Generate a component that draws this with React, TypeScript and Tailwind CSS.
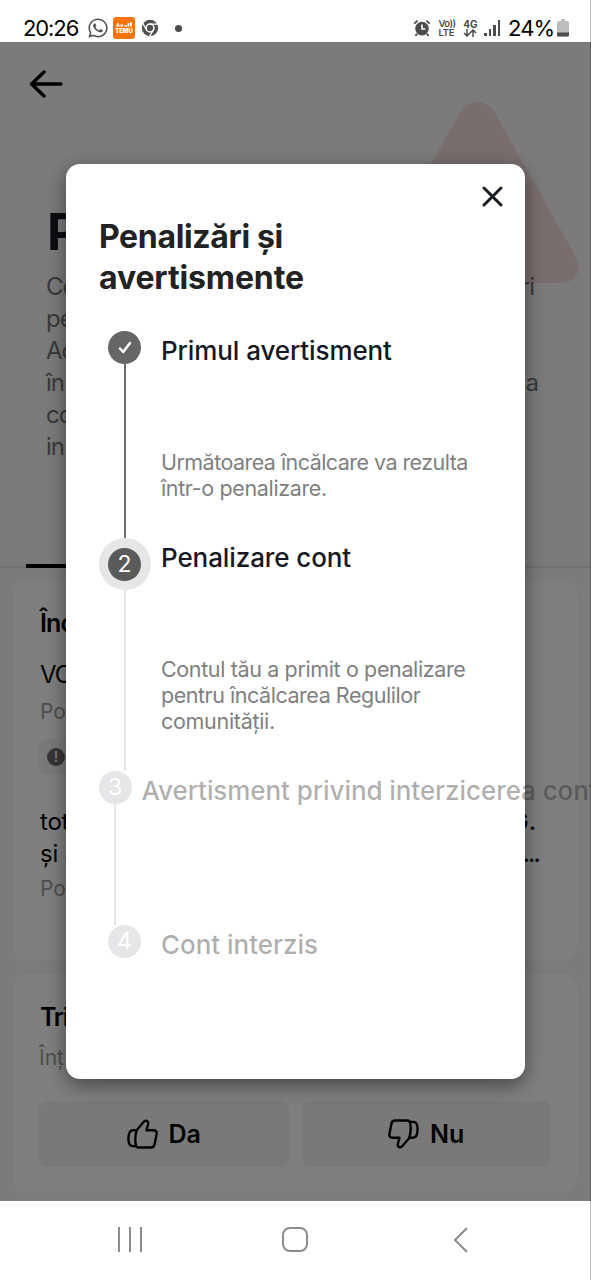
import React from 'react';
import { FaWhatsapp } from 'react-icons/fa';

function StatusBar() {
  return (
    <header className="flex h-[42px] shrink-0 items-end justify-between bg-white pr-[22px] pl-[23px] text-black">
      <div className="flex h-7 items-center">
        <span className="w-[56px] text-[22px] leading-7 tracking-[-1.1px]">20:26</span>
        <FaWhatsapp className="ml-[8px] size-[22px] text-[#555]" />
        <div className="ml-[4px] flex size-[22px] flex-col items-center justify-center rounded-[3px] bg-[#f97508] text-white">
          <svg className="h-[5px] w-[16px]" viewBox="0 0 16 5" fill="#fff">
            <path d="M0 4.500 2 .5l2 4zM4.500 2.500h2.500v2H4.500zM8 3.300h3v1.200H8zM11.500 1h1.600v3.500h-1.600zM13.800.5H16v4h-2.200z" />
          </svg>
          <span className="text-[6px] leading-[7px] font-black tracking-[-0.1px]">TEMU</span>
        </div>
        <svg className="ml-[6px] size-[18px]" viewBox="0 0 18 18">
          <circle cx="9" cy="9" r="8.2" fill="#505050" />
          <circle cx="9" cy="9" r="3.9" fill="#505050" stroke="#fff" strokeWidth="1.5" />
          <path d="M9 5.100h8M5.600 11 1.600 4.200M12.400 11l-4 6.600" stroke="#fff" strokeWidth="1.300" />
        </svg>
        <span className="ml-4 size-[7px] rounded-full bg-[#4a4a4a]" />
      </div>
      <div className="flex h-7 items-center text-[#4c4c4c]">
        <svg className="size-[18px]" viewBox="0 0 18 18">
          <circle cx="9" cy="9.6" r="6.8" fill="#4c4c4c" />
          <path d="M1.200 4.600 4.600 1.600M16.800 4.600l-3.400-3M4 14.800l-1.600 2M14 14.800l1.600 2" stroke="#4c4c4c" strokeWidth="1.9" />
          <path d="M9 5.400v4.600h3.400" stroke="#fff" strokeWidth="1.6" fill="none" />
        </svg>
        <div className="ml-[7px] flex w-[18px] flex-col text-[9.5px] leading-[9px] font-semibold">
          <span className="tracking-[-0.5px]">Vo))</span>
          <span className="tracking-[-0.2px]">LTE</span>
        </div>
        <div className="ml-[6px] flex w-4 flex-col items-center">
          <span className="text-[10px] leading-[10px] font-bold">4G</span>
          <svg className="h-[8px] w-[14px]" viewBox="0 0 14 8" fill="none" stroke="#4c4c4c" strokeWidth="1.5">
            <path d="M4 0v7M1 4l3 3 3-3M10 8V1M7 4l3-3 3 3" />
          </svg>
        </div>
        <div className="ml-[6px] flex h-4 items-end gap-[2px]">
          <span className="h-[3px] w-[2.4px] bg-[#4c4c4c]" />
          <span className="h-[7px] w-[2.4px] bg-[#4c4c4c]" />
          <span className="h-[11px] w-[2.4px] bg-[#4c4c4c]" />
          <span className="h-[16px] w-[2.4px] bg-[#4c4c4c]" />
        </div>
        <span className="ml-[8px] w-[45px] text-[22px] leading-7 tracking-[-0.9px] text-black">24%</span>
        <svg className="ml-[4px] h-[18px] w-3" viewBox="0 0 12 18">
          <path d="M4 0h4v2h2a2 2 0 0 1 2 2v12a1.600 1.600 0 0 1-1.600 1.600H1.600A1.600 1.600 0 0 1 0 16V4a2 2 0 0 1 2-2h2z" fill="#bdbdbd" />
          <path d="M0 13.500h12V16a1.600 1.600 0 0 1-1.600 1.600H1.600A1.600 1.600 0 0 1 0 16z" fill="#4c4c4c" />
        </svg>
      </div>
    </header>
  );
}

function Thumb({ down = false }: { down?: boolean }) {
  return (
    <svg
      className={down ? 'h-[30px] w-[31px] rotate-180' : 'h-[30px] w-[31px]'}
      viewBox="0 0 31 30"
      fill="none"
      stroke="#000"
      strokeWidth="2.4"
      strokeLinejoin="round"
      strokeLinecap="round"
    >
      <path d="M9.800 11 16.400 3.200c2-2.600 5.400-1.300 4.800 1.500l-1.700 6.600h7c2.200 0 3.500 1.500 3.100 3.600l-2 10.400c-.4 2-1.700 3.200-3.800 3.200H11.600c-1.700 0-2.600-.9-2.800-2.600-.8-5-.6-10.500 1-14.900z" />
      <path d="M8.600 11.300H6.400c-2.600 0-4 1.500-4.500 4.200-.5 2.400-.6 4.900-.2 7.300.4 2.700 1.900 4.300 4.300 4.300h3" />
    </svg>
  );
}

function BackgroundPage() {
  return (
    <main className="relative flex h-[1159px] shrink-0 flex-col bg-[#f7f7f7] text-black">
      <svg className="absolute top-[59px] left-[374px] h-[184px] w-[206px]" viewBox="0 0 206 184">
        <path d="M86 12C94-3 112-3 121 12L202 156Q208 170 199 178Q194 182 186 182H20Q12 182 7 178Q-2 170 4 156Z" fill="#f3dddc" />
      </svg>
      <div className="relative flex flex-col pl-[47px]">
        <svg className="mt-7 -ml-[18px] h-[28px] w-[34px]" viewBox="0 0 34 28" fill="none" stroke="#000" strokeWidth="3.300" strokeLinecap="round" strokeLinejoin="round">
          <path d="M32 14H3M15 2 2.500 14 15 26" />
        </svg>
        <h1 className="mt-[104px] text-[51px] leading-[60px] font-bold text-[#161823]">P</h1>
        <div className="mt-[9px] -ml-px flex w-[492px] justify-between text-[24px] leading-8 tracking-[-1px] text-[#747474]">
          <p className="flex flex-col">
            <span>Co</span>
            <span>pe</span>
            <span>Ac</span>
            <span>în</span>
            <span>co</span>
            <span>in</span>
          </p>
          <p className="flex flex-col items-end">
            <span className="mr-[4px]">ri</span>
            <span className="mt-16">a</span>
          </p>
        </div>
      </div>
      <div className="mt-[101px] flex h-[4px] shrink-0 items-center bg-[linear-gradient(#e3e3e3,#e3e3e3)] bg-[length:100%_2px] bg-bottom bg-no-repeat pl-[26px]">
        <span className="h-[4px] w-[80px] bg-black" />
      </div>
      <section className="mr-[14px] ml-[13px] mt-[13px] flex h-[380px] shrink-0 flex-col rounded-[14px] bg-white pl-[27px]">
        <h2 className="mt-[26px] text-[25px] leading-8 font-semibold tracking-[-0.8px]">Înc</h2>
        <p className="mt-5 text-[24px] leading-8 tracking-[-1px]">VO</p>
        <p className="mt-[7px] text-[21px] leading-7 text-[#9c9c9c]">Po</p>
        <div className="mt-[13px] -ml-px flex h-[35px] w-20 items-center rounded-md bg-[#f3f3f3] pl-2">
          <span className="flex size-[18px] items-center justify-center rounded-full bg-[#6b6b6b] text-[14px] leading-none font-semibold text-[#f3f3f3]">!</span>
        </div>
        <div className="mt-8 flex w-[499px] justify-between text-[24px] leading-8">
          <p className="flex flex-col tracking-[-0.2px]">
            <span>tot</span>
            <span>și a</span>
          </p>
          <p className="flex flex-col items-end font-medium">
            <span className="mr-[3px]">G.</span>
            <span className="tracking-[-1.8px]">...</span>
          </p>
        </div>
        <p className="mt-[5px] text-[21px] leading-7 text-[#9c9c9c]">Po</p>
      </section>
      <section className="mr-[14px] ml-[13px] mt-[13px] flex h-[219px] shrink-0 flex-col rounded-[14px] bg-white px-[26px]">
        <h2 className="mt-[27px] ml-px text-[25px] leading-8 font-semibold tracking-[-1.3px]">Tri</h2>
        <p className="mt-[11px] text-[21px] leading-7 text-[#9c9c9c]">Înț</p>
        <div className="mt-[29px] flex h-[66px] gap-[13px] text-[25px] font-semibold">
          <button className="flex flex-1 items-center justify-center gap-[11px] rounded-lg bg-[#f3f3f3]">
            <Thumb />
            <span className="pt-[2px]">Da</span>
          </button>
          <button className="flex flex-1 items-center justify-center gap-[11px] rounded-lg bg-[#f3f3f3]">
            <Thumb down />
            <span className="pt-[2px]">Nu</span>
          </button>
        </div>
      </section>
    </main>
  );
}

function Dialog() {
  return (
    <div className="absolute inset-x-0 top-[42px] flex h-[1159px] bg-black/50 pt-[122px] pl-[66px]">
      <div className="flex h-[915px] w-[459px] shrink-0 flex-col rounded-[14px] bg-white pl-[33px] shadow-[0_6px_20px_rgba(0,0,0,0.45)]">
        <div className="mt-[22px] mr-[22px] flex h-[21px] justify-end">
          <svg className="size-[21px]" viewBox="0 0 21 21" stroke="#161823" strokeWidth="3" strokeLinecap="round">
            <path d="M2 2l17 17M19 2 2 19" />
          </svg>
        </div>
        <h2 className="mt-[9px] flex flex-col text-[32px] leading-[41px] font-bold text-[#222]">
          <span className="tracking-[-0.35px]">Penalizări și</span>
          <span className="tracking-[-0.12px]">avertismente</span>
        </h2>
        <ol className="mt-[33px] -ml-[0.5px] flex flex-col text-[#161823]">
          <li className="flex h-[207px] gap-[10.5px]">
            <div className="flex w-[52px] flex-col items-center">
              <span className="flex size-[33px] items-center justify-center rounded-full bg-[#666]">
                <svg className="h-[13px] w-[14px]" viewBox="0 0 14 13" fill="none" stroke="#fff" strokeWidth="2.500" strokeLinecap="round" strokeLinejoin="round">
                  <path d="M2 7.500 5.200 11 12 2" />
                </svg>
              </span>
              <span className="w-[2px] flex-1 bg-[#6c6c6c]" />
            </div>
            <div className="pt-[3.5px]">
              <h3 className="text-[26px] leading-8 font-medium tracking-[-0.1px] whitespace-nowrap">Primul avertisment</h3>
              <p className="mt-[82px] flex flex-col text-[21.5px] leading-[26.2px] whitespace-nowrap text-[#808080]">
                <span className="tracking-[-0.55px]">Următoarea încălcare va rezulta</span>
                <span className="tracking-[-0.36px]">într-o penalizare.</span>
              </p>
            </div>
          </li>
          <li className="flex h-[233px] gap-[10.5px]">
            <div className="flex w-[52px] flex-col items-center">
              <span className="flex size-[52px] items-center justify-center rounded-full bg-[#e6e6e8]">
                <span className="flex size-[33px] items-center justify-center rounded-full bg-[#5a5a5a] text-[23px] leading-none text-white">2</span>
              </span>
              <span className="w-[2px] flex-1 bg-[#e6e6e8]" />
            </div>
            <div className="pt-[3.5px]">
              <h3 className="text-[26px] leading-8 font-medium tracking-[-0.1px] whitespace-nowrap">Penalizare cont</h3>
              <p className="mt-[82px] flex flex-col text-[21.5px] leading-[26.2px] whitespace-nowrap text-[#808080]">
                <span className="tracking-[-0.37px]">Contul tău a primit o penalizare</span>
                <span className="tracking-[-0.46px]">pentru încălcarea Regulilor</span>
                <span className="tracking-[-0.3px]">comunității.</span>
              </p>
            </div>
          </li>
          <li className="flex h-[154px] gap-[10px]">
            <div className="flex w-[33px] shrink-0 flex-col items-center">
              <span className="flex size-[33px] items-center justify-center rounded-full bg-[#e6e6e8] text-[23px] leading-none text-white">3</span>
              <span className="w-[2px] flex-1 bg-[#e6e6e8]" />
            </div>
            <h3 className="pt-[3.5px] text-[26px] leading-8 font-medium tracking-[-0.07px] whitespace-nowrap text-[#161616]/35">Avertisment privind interzicerea cont</h3>
          </li>
          <li className="flex gap-[10.5px]">
            <div className="flex w-[52px] flex-col items-center">
              <span className="flex size-[33px] items-center justify-center rounded-full bg-[#e6e6e8] text-[23px] leading-none text-white">4</span>
            </div>
            <h3 className="pt-[3.5px] text-[26px] leading-8 font-medium tracking-[-0.03px] whitespace-nowrap text-[#161616]/35">Cont interzis</h3>
          </li>
        </ol>
      </div>
    </div>
  );
}

function NavBar() {
  return (
    <nav className="flex h-[79px] shrink-0 items-center bg-white pb-[2px] pl-[118px]">
      <div className="flex h-[25px] w-[24px] justify-between">
        <span className="w-[2px] bg-[#8c8c8c]" />
        <span className="w-[2px] bg-[#8c8c8c]" />
        <span className="w-[2px] bg-[#8c8c8c]" />
      </div>
      <span className="ml-[140px] h-[25px] w-[26px] rounded-[8px] border-2 border-[#8c8c8c]" />
      <svg className="ml-[145px] h-[26px] w-[15px]" viewBox="0 0 15 26" fill="none" stroke="#8c8c8c" strokeWidth="2">
        <path d="M14 1 2 13l12 12" />
      </svg>
    </nav>
  );
}

export default function App() {
  return (
    <div className="relative flex h-[1280px] w-[591px] flex-col overflow-hidden font-[Inter,sans-serif]">
      <StatusBar />
      <BackgroundPage />
      <NavBar />
      <Dialog />
      <div className="absolute top-0 right-0 h-full w-px bg-black/25" />
    </div>
  );
}
